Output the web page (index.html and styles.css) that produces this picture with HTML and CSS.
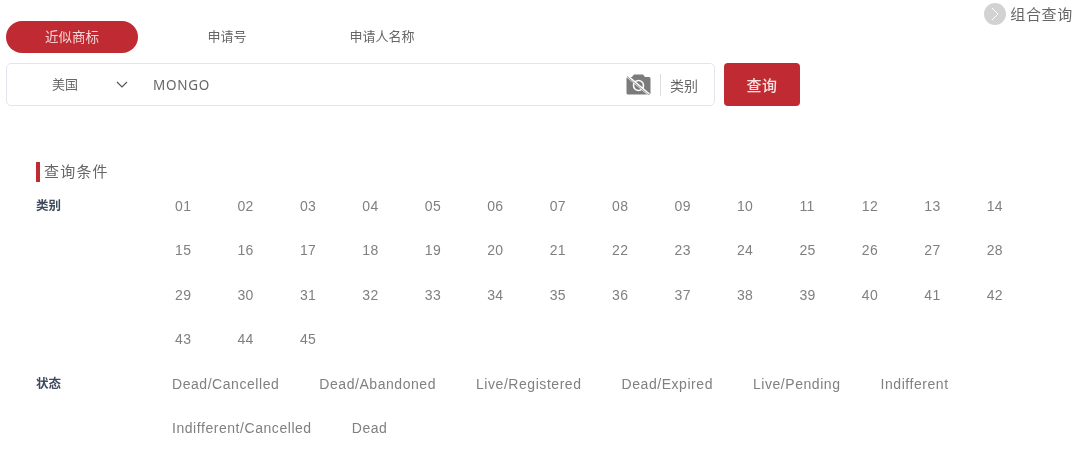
FILE: index.html

```html
<!DOCTYPE html>
<html lang="en">
<head>
    <meta charset="UTF-8">
    <title>商标查询</title>
    <link rel="stylesheet" href="styles.css">
</head>
<body>
    <div class="top-link">
        <span class="round-arrow">
            <svg width="12" height="14" viewBox="0 0 12 14"><path d="M3 1 L9 7 L3 13" fill="none" stroke="#fff" stroke-width="1"/></svg>
        </span>
        <span>组合查询</span>
    </div>

    <div class="tabs">
        <div class="tab active">近似商标</div>
        <div class="tab tab-two">申请号</div>
        <div class="tab tab-three">申请人名称</div>
    </div>

    <div class="search-row">
        <div class="search-box">
            <div class="country">美国</div>
            <svg class="chevron" width="12" height="7" viewBox="0 0 12 7"><path d="M1 1 L6 6 L11 1" fill="none" stroke="#555" stroke-width="1.2"/></svg>
            <div class="keyword">MONGO</div>
            <svg class="camera" width="25" height="21" viewBox="0 0 25 21">
                <path d="M6 3 L8 0.500 H17 L19 3 H23 Q24.500 3 24.500 4.500 V19 Q24.500 20.500 23 20.500 H2 Q0.500 20.500 0.500 19 V4.500 Q0.500 3 2 3 Z" fill="#7b7b7b"/>
                <circle cx="12.500" cy="11.500" r="5" fill="none" stroke="#fff" stroke-width="1.600"/>
                <path d="M0 1 L23 20.500" stroke="#fff" stroke-width="2.600"/>
                <path d="M1 2.500 L23 21" stroke="#7b7b7b" stroke-width="0.800"/>
            </svg>
            <div class="divider"></div>
            <div class="class-link">类别</div>
        </div>
        <button class="search-btn">查询</button>
    </div>

    <div class="section-title">查询条件</div>

    <div class="filter filter-class">
        <div class="filter-label">类别</div>
        <div class="class-grid">
            <span>01</span><span>02</span><span>03</span><span>04</span><span>05</span><span>06</span><span>07</span>
            <span>08</span><span>09</span><span>10</span><span>11</span><span>12</span><span>13</span><span>14</span>
            <span>15</span><span>16</span><span>17</span><span>18</span><span>19</span><span>20</span><span>21</span>
            <span>22</span><span>23</span><span>24</span><span>25</span><span>26</span><span>27</span><span>28</span>
            <span>29</span><span>30</span><span>31</span><span>32</span><span>33</span><span>34</span><span>35</span>
            <span>36</span><span>37</span><span>38</span><span>39</span><span>40</span><span>41</span><span>42</span>
            <span>43</span><span>44</span><span>45</span>
        </div>
    </div>

    <div class="filter">
        <div class="filter-label">状态</div>
        <div class="status-list">
            <span>Dead/Cancelled</span>
            <span>Dead/Abandoned</span>
            <span>Live/Registered</span>
            <span>Dead/Expired</span>
            <span>Live/Pending</span>
            <span>Indifferent</span>
            <span>Indifferent/Cancelled</span>
            <span>Dead</span>
        </div>
    </div>
</body>
</html>
```

FILE: styles.css

```css
body {
    margin: 0;
    height: 450px;
    overflow: hidden;
    background-color: #fff;
    font-family: "Liberation Sans", Arial, "Noto Sans CJK SC", sans-serif;
    color: #808080;
    will-change: transform;
}
.top-link {
    display: flex;
    justify-content: flex-end;
    align-items: center;
    gap: 4px;
    height: 23px;
    padding: 2px 7px 0 0;
    font-family: "Noto Sans CJK SC", sans-serif;
    font-size: 15px;
    letter-spacing: 0.700px;
    color: #666;
}
.round-arrow {
    display: flex;
    align-items: center;
    justify-content: center;
    width: 22px;
    height: 22px;
    border-radius: 50%;
    background-color: #d2d2d2;
}
.tabs {
    display: flex;
    margin: -4px 0 0 6px;
    height: 32px;
    font-family: "Noto Sans CJK SC", sans-serif;
    font-size: 13px;
    line-height: 30px;
    color: #666;
}
.tab {
    text-align: center;
}
.tab.active {
    width: 132px;
    border-radius: 16px;
    background-color: #c02a32;
    color: #f3d6d8;
    font-size: 13.500px;
}
.tab-two {
    width: 178px;
}
.tab-three {
    width: 198px;
    margin-left: -33px;
}
.search-row {
    display: flex;
    gap: 9px;
    margin: 10px 0 0 6px;
}
.search-box {
    display: flex;
    align-items: center;
    box-sizing: border-box;
    width: 709px;
    height: 43px;
    border: 1px solid #e4e4ec;
    border-radius: 5px;
}
.country {
    width: 108px;
    height: 40px;
    padding-left: 45px;
    box-sizing: border-box;
    font-family: "Noto Sans CJK SC", sans-serif;
    font-size: 13px;
    line-height: 38px;
    color: #666;
}
.chevron {
    margin-left: 1px;
}
.keyword {
    flex: 1;
    margin-left: 25px;
    font-family: "Noto Sans", sans-serif;
    font-size: 13.500px;
    letter-spacing: 0.700px;
    color: #666;
}
.camera {
    margin-right: 9px;
}
.divider {
    width: 1px;
    height: 22px;
    background-color: #ddd;
}
.class-link {
    width: 53px;
    padding-left: 9px;
    box-sizing: border-box;
    font-family: "Noto Sans CJK SC", sans-serif;
    font-size: 14px;
    color: #666;
}
.search-btn {
    width: 76px;
    height: 43px;
    border: none;
    border-radius: 4px;
    background-color: #c02a32;
    color: #f8e4e5;
    font-family: "Noto Sans CJK SC", sans-serif;
    font-size: 15px;
    font-weight: 500;
    letter-spacing: 0.500px;
}
.section-title {
    margin: 56px 0 0 36px;
    padding-left: 4px;
    height: 20px;
    border-left: 4px solid #c02a32;
    font-family: "Noto Sans CJK SC", sans-serif;
    font-size: 15px;
    line-height: 18px;
    letter-spacing: 1.200px;
    color: #666;
}
.filter {
    display: flex;
    margin-left: 36px;
}
.filter-class {
    margin-top: 11px;
    height: 178px;
}
.filter-label {
    width: 136px;
    flex-shrink: 0;
    font-family: "Noto Sans CJK SC", sans-serif;
    font-size: 12.500px;
    font-weight: 700;
    line-height: 23px;
    color: #3c4a5c;
}
.class-grid {
    display: grid;
    grid-template-columns: repeat(14, 62.450px);
    grid-auto-rows: 44.400px;
    padding: 1px 0 0 3px;
    font-size: 14px;
    letter-spacing: 0.400px;
    line-height: 24px;
}
.status-list {
    display: flex;
    flex-wrap: wrap;
    column-gap: 40px;
    width: 860px;
    margin-top: -9px;
    font-size: 14px;
    letter-spacing: 0.550px;
    line-height: 44px;
}
```
